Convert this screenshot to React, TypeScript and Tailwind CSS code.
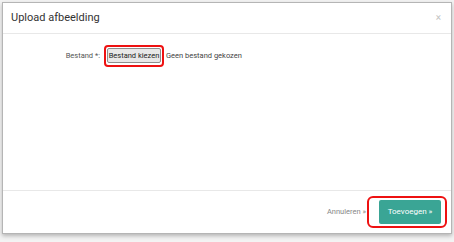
export default function App() {
  return (
    <div className="w-[454px] h-[242px] bg-[#f3f3f3] pt-[2px] pl-[2px] font-['Roboto',sans-serif] overflow-hidden">
      <div className="w-[450px] h-[232px] bg-white border border-[#b5b5b5] shadow-[0_2px_4px_rgba(0,0,0,0.25)] flex flex-col">
        <div className="h-[31px] border-b border-[#e8e8e8] flex items-center justify-between pl-[8px] pr-[10px]">
          <h4 className="text-[11px] text-[#333]">Upload afbeelding</h4>
          <span className="text-[10px] text-[#c4c4c4] leading-none">×</span>
        </div>
        <div className="flex-1 pt-[14px]">
          <div className="flex items-center h-[15px]">
            <label className="w-[104px] pr-[7px] text-right text-[7.5px] leading-none text-[#555]">Bestand *:</label>
            <span className="relative flex">
              <button className="h-[15px] w-[54px] text-[7.5px] text-[#222] bg-[#e8e8e8] border border-[#8e8e8e] rounded-[2px] leading-none">
                Bestand kiezen
              </button>
              <span className="absolute -left-[3px] -right-[3px] -top-[3px] -bottom-[4px] border-2 border-[#ee1111] rounded-[4px]"></span>
            </span>
            <span className="ml-[5px] text-[7.5px] leading-none text-[#444]">Geen bestand gekozen</span>
          </div>
        </div>
        <div className="h-[43px] border-t border-[#e8e8e8] flex items-center justify-end pr-[10px]">
          <span className="text-[7.5px] text-[#888] mr-[13px]">Annuleren »</span>
          <span className="relative flex">
            <button className="h-[24px] w-[62px] bg-[#3aa595] text-white text-[8px] rounded-[2px]">Toevoegen »</button>
            <span className="absolute -left-[12px] -right-[6px] -top-[4px] -bottom-[4px] border-2 border-[#ee1111] rounded-[6px]"></span>
          </span>
        </div>
      </div>
    </div>
  );
}
